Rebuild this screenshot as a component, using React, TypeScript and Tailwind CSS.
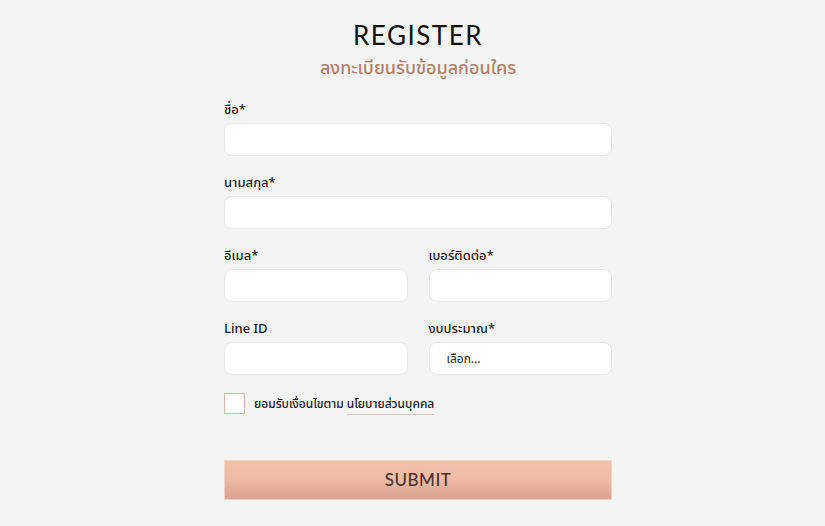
import React, { useState } from 'react';

const thai = { fontFamily: '"Noto Sans Thai", "Noto Sans", "Liberation Sans", sans-serif' };

const Field = ({ label, children }: { label: string; children?: React.ReactNode }) => (
  <div className="flex flex-col">
    <label className="h-5 mb-[3px] text-[13px] leading-5 font-medium text-[#1a1a1a]" style={thai}>
      {label}
    </label>
    {children ?? (
      <input
        type="text"
        className="h-[33px] w-full rounded-[8px] border border-[#e6e6e6] bg-white px-4 text-[14px] outline-none"
      />
    )}
  </div>
);

export default function App() {
  const [agree, setAgree] = useState(false);

  return (
    <div className="min-h-[526px] w-full bg-[#f4f4f4] flex flex-col items-center pt-[21px] pl-[11px]">
      <h1
        className="text-[26px] leading-[28px] tracking-[1.5px] text-[#111] font-normal"
        style={{ fontFamily: '"Lato", "Liberation Sans", sans-serif' }}
      >
        REGISTER
      </h1>
      <p className="mt-[7px] text-[18px] leading-[26px] font-medium text-[#b38169]" style={thai}>
        ลงทะเบียนรับข้อมูลก่อนใคร
      </p>

      <form className="mt-[18px] w-[388px] flex flex-col" onSubmit={(e) => e.preventDefault()}>
        <div className="flex flex-col gap-[17px]">
          <Field label="ชื่อ*" />
          <Field label="นามสกุล*" />
          <div className="grid grid-cols-2 gap-x-[21px] gap-y-[17px]">
            <Field label="อีเมล*" />
            <Field label="เบอร์ติดต่อ*" />
            <Field label="Line ID" />
            <Field label="งบประมาณ*">
              <div
                className="h-[33px] w-full rounded-[8px] border border-[#e6e6e6] bg-white pl-[17px] flex items-center text-[12px] text-[#222]"
                style={thai}
              >
                เลือก...
              </div>
            </Field>
          </div>
        </div>

        <div className="mt-[18px] flex items-center gap-[9px]">
          <button
            type="button"
            onClick={() => setAgree(!agree)}
            className="h-[21px] w-[21px] border border-[#dcb4a4] bg-white"
          />
          <span className="text-[12px] font-medium text-[#1a1a1a]" style={thai}>
            ยอมรับเงื่อนไขตาม{' '}
            <a className="border-b border-[#cfc6c2] pb-[1px]">นโยบายส่วนบุคคล</a>
          </span>
        </div>

        <button
          type="submit"
          className="mt-[46px] h-[40px] w-full bg-gradient-to-b from-[#f2c1ac] via-[#eebba4] to-[#d9a28c] border border-[#f5d3c4] text-[17px] tracking-[0.5px] font-medium text-[#453530]"
          style={{ fontFamily: '"Lato", "Liberation Sans", sans-serif' }}
        >
          SUBMIT
        </button>
      </form>
    </div>
  );
}
